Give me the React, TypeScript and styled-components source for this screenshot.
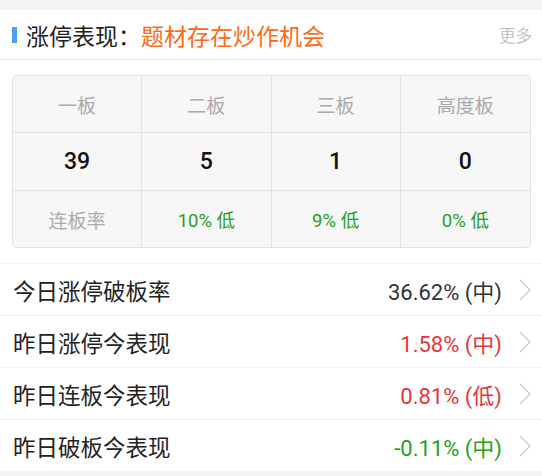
import styled, { createGlobalStyle } from "styled-components";

const GlobalStyle = createGlobalStyle`
  html, body {
    margin: 0;
    padding: 0;
    background: #f3f3f3;
    font-family: Roboto, "Noto Sans CJK SC", sans-serif;
  }
`;

interface Stat {
  label: string;
  value: string;
  tone: "neutral" | "up" | "down";
}

const boards = [
  { name: "一板", count: 39, rate: "" },
  { name: "二板", count: 5, rate: "10% 低" },
  { name: "三板", count: 1, rate: "9% 低" },
  { name: "高度板", count: 0, rate: "0% 低" },
];

const stats: Stat[] = [
  { label: "今日涨停破板率", value: "36.62% (中)", tone: "neutral" },
  { label: "昨日涨停今表现", value: "1.58% (中)", tone: "up" },
  { label: "昨日连板今表现", value: "0.81% (低)", tone: "up" },
  { label: "昨日破板今表现", value: "-0.11% (中)", tone: "down" },
];

const toneColor = {
  neutral: "#333333",
  up: "#e8353a",
  down: "#21a11c",
};

export default function App() {
  return (
    <>
      <GlobalStyle />
      <Page>
        <Header>
          <Marker />
          <Title>涨停表现：</Title>
          <Highlight>题材存在炒作机会</Highlight>
          <More>更多</More>
        </Header>
        <TableWrap>
          <Table>
            {boards.map((b) => (
              <HeadCell key={b.name}>{b.name}</HeadCell>
            ))}
            {boards.map((b) => (
              <CountCell key={b.name}>{b.count}</CountCell>
            ))}
            {boards.map((b, i) =>
              i === 0 ? (
                <HeadCell key={b.name} $last>
                  连板率
                </HeadCell>
              ) : (
                <RateCell key={b.name}>{b.rate}</RateCell>
              )
            )}
          </Table>
        </TableWrap>
        <List>
          {stats.map((s) => (
            <Row key={s.label}>
              <Label>{s.label}</Label>
              <Value $tone={s.tone}>{s.value}</Value>
              <Chevron viewBox="0 0 12 22">
                <path d="M1 1 L11 11 L1 21" fill="none" stroke="#c8c8c8" strokeWidth="1.2" />
              </Chevron>
            </Row>
          ))}
        </List>
      </Page>
    </>
  );
}

const Page = styled.div`
  padding-top: 10px;
  width: 542px;
`;

const Header = styled.div`
  display: flex;
  align-items: center;
  height: 49px;
  padding: 0 10px 0 12px;
  background: #ffffff;
  border-bottom: 1px solid #e6e6e6;
`;

const Marker = styled.span`
  width: 5px;
  height: 16px;
  background: #4b9ff7;
  margin-right: 9px;
`;

const Title = styled.span`
  font-size: 23px;
  color: #222222;
`;

const Highlight = styled.span`
  font-size: 23px;
  color: #ff6a17;
`;

const More = styled.span`
  margin-left: auto;
  font-size: 16.5px;
  color: #c4c4c4;
`;

const TableWrap = styled.div`
  background: #ffffff;
  padding: 15px 11px 15px 12px;
`;

const Table = styled.div`
  display: grid;
  grid-template-columns: repeat(4, 1fr);
  grid-template-rows: 57px 58px 56px;
  background: #f7f7f7;
  border: 1px solid #dfe2ea;
  border-radius: 5px;
  overflow: hidden;
`;

const Cell = styled.div`
  display: flex;
  align-items: center;
  justify-content: center;
  border-right: 1px solid #dfe2ea;
  border-bottom: 1px solid #dfe2ea;
  &:nth-child(4n) {
    border-right: none;
  }
  &:nth-child(n + 9) {
    border-bottom: none;
  }
`;

const HeadCell = styled(Cell)<{ $last?: boolean }>`
  font-size: 19px;
  color: #aaaaaa;
`;

const CountCell = styled(Cell)`
  font-size: 23px;
  font-weight: 500;
  color: #111111;
`;

const RateCell = styled(Cell)`
  font-size: 18.5px;
  color: #27a01f;
`;

const List = styled.div`
  background: #ffffff;
  border-top: 1px solid #f0f0f0;
  margin-top: 0;
`;

const Row = styled.div`
  display: flex;
  align-items: center;
  height: 51px;
  padding: 0 11px 0 13px;
  border-bottom: 1px solid #f0f0f0;
`;

const Label = styled.span`
  font-size: 22.5px;
  color: #222222;
`;

const Value = styled.span<{ $tone: Stat["tone"] }>`
  margin-left: auto;
  font-size: 22px;
  color: ${(p) => toneColor[p.$tone]};
`;

const Chevron = styled.svg`
  width: 12px;
  height: 22px;
  margin-left: 17px;
`;
